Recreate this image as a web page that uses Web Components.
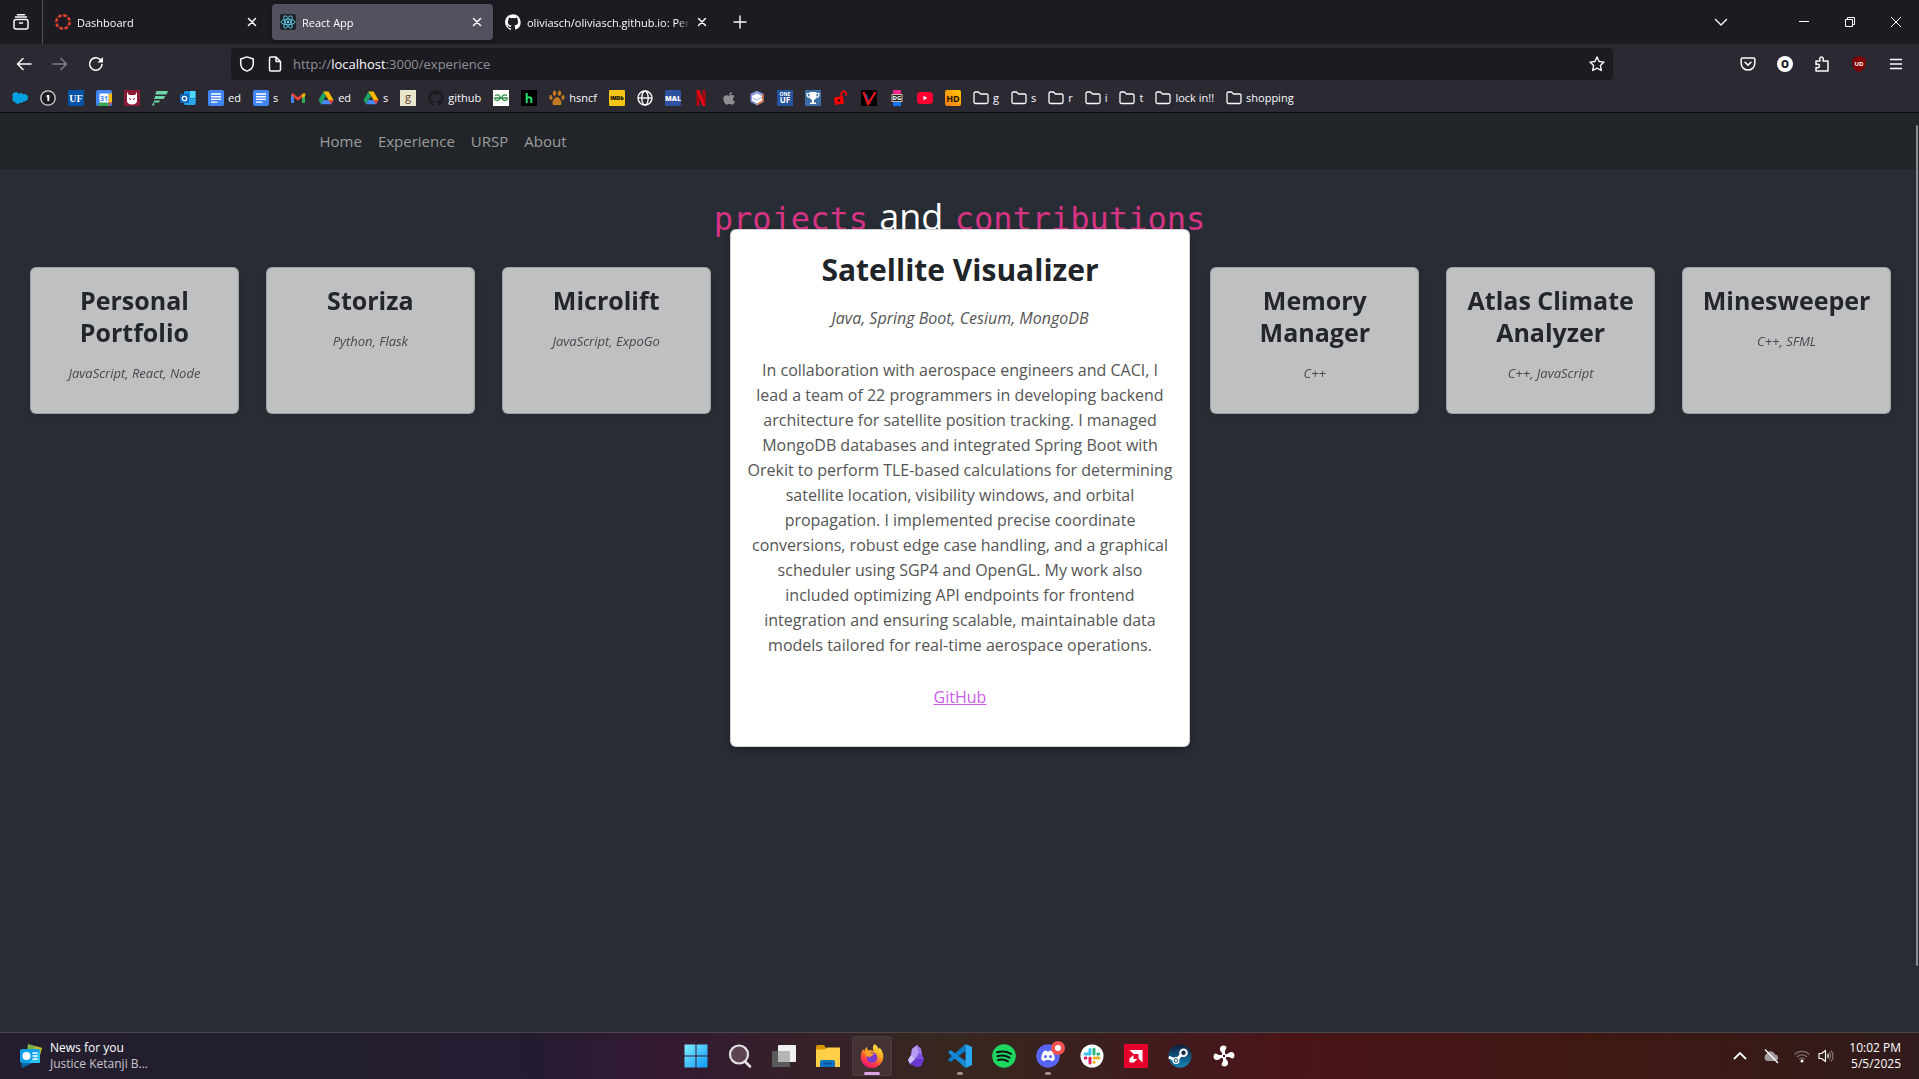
<!DOCTYPE html>
<html lang="en">
<head>
<meta charset="utf-8">
<title>React App</title>
<style>
  html, body { margin: 0; height: 100%; }
  body { font-family: "Open Sans", "Noto Sans", sans-serif; background: #282c34; overflow: hidden; }
</style>
</head>
<body>
<desktop-screen></desktop-screen>
<script>
const GITHUB = 'M8 .2a8 8 0 0 0-2.5 15.6c.4.1.5-.2.5-.4v-1.500c-2.200.5-2.700-1-2.700-1-.4-.9-.9-1.200-.9-1.200-.7-.5.1-.5.1-.5.8.1 1.200.8 1.200.8.7 1.200 1.900.9 2.300.7.1-.5.3-.9.5-1.100-1.800-.2-3.600-.9-3.600-4 0-.9.3-1.600.8-2.100-.1-.2-.4-1 .1-2.100 0 0 .7-.2 2.200.8a7.500 7.500 0 0 1 4 0c1.500-1 2.200-.8 2.200-.8.4 1.100.2 1.900.1 2.100.5.6.8 1.300.8 2.100 0 3.100-1.900 3.700-3.700 3.900.3.3.6.8.6 1.500v2.200c0 .2.1.5.6.4A8 8 0 0 0 8 .2z';
const FAN = [0, 90, 180, 270].map(a => `<path transform="rotate(${a} 12 12)" d="M11 11.500C10.500 8.500 7.300 7 8 4c.7-2.700 4.500-3.200 6-1.500 1.300 1.600-.8 3-1 5-.1 1.500.3 2.500 0 4z" fill="#fff"/>`).join('');
const BOOKMARK_FONT = 'font-family="Open Sans, Noto Sans, sans-serif" text-anchor="middle"';
const DOC = '<rect width="16" height="16" rx="2" fill="#4285f4"/><path d="M3 4h10M3 6.700h10M3 9.400h10M3 12.100h6.500" stroke="#fff" stroke-width="1.400"/>';
const DRIVE = '<path d="M5.500 1.500h5L8 6z" fill="#188038"/><path d="M5.500 1.500 0.500 10l2.500 4.300L8 6z" fill="#1ea362"/><path d="M10.500 1.500 15.500 10h-5L5.500 1.500z" fill="#ffba00"/><path d="M5.500 10h10L13 14.300H3z" fill="#4688f4"/><path d="M15.500 10 13 14.300 10.500 10z" fill="#ea4335"/>';
const L = 'fill="none" stroke="currentColor" stroke-linecap="round" stroke-linejoin="round"';

const ICONS = {
  recent: [16, `<g ${L} stroke-width="1.500"><rect x="1" y="5.500" width="14" height="9.500" rx="2"/><path d="M2.500 3h11M4.500.8h7M6.500 9h3"/></g>`],
  canvas: [16, `<circle cx="8" cy="8" r="6.700" fill="none" stroke="#e13f2b" stroke-width="2.600" stroke-dasharray="3.600 1.660"/>`],
  react: [16, `<rect width="16" height="16" rx="2" fill="#20232a"/><g fill="none" stroke="#61dafb" stroke-width=".8"><ellipse cx="8" cy="8" rx="7" ry="2.700"/><ellipse cx="8" cy="8" rx="7" ry="2.700" transform="rotate(60 8 8)"/><ellipse cx="8" cy="8" rx="7" ry="2.700" transform="rotate(120 8 8)"/></g><circle cx="8" cy="8" r="1.300" fill="#61dafb"/>`],
  github: [16, `<path d="${GITHUB}" fill="currentColor"/>`],
  close: [16, `<path d="M4.500 4.500l7 7m0-7l-7 7" ${L} stroke-width="1.500"/>`],
  plus: [16, `<path d="M8 2v12M2 8h12" ${L} stroke-width="1.400"/>`],
  chevron: [16, `<path d="M2.500 5.500 8 11l5.500-5.500" ${L} stroke-width="1.400"/>`],
  minimize: [16, `<path d="M3 7.500h10" stroke="#fff" fill="none"/>`],
  restore: [16, `<path d="M3.500 5.500h7v7h-7zM5.500 5V3.500h7v7H11" fill="none" stroke="#fff"/>`],
  quit: [16, `<path d="M3 3l10 10M13 3 3 13" fill="none" stroke="#fff"/>`],
  back: [16, `<path d="M15 8H2M7 2.500 1.500 8 7 13.500" ${L} stroke-width="1.500"/>`],
  forward: [16, `<path d="M1 8h13M9 2.500 14.500 8 9 13.500" ${L} stroke-width="1.500"/>`],
  reload: [16, `<path d="M14 8.500A6.200 6.200 0 1 1 12 3.400L14 5.500" ${L} stroke-width="1.600"/><path d="M15 1v5.500H9.500z" fill="currentColor"/>`],
  shield: [16, `<path d="M8 .9 14.300 3v4.500c0 3.600-2.500 6.300-6.300 7.600-3.800-1.300-6.300-4-6.300-7.600V3z" ${L} stroke-width="1.500"/>`],
  page: [16, `<path d="M4 1h5l4.500 4.500V13.500a1.500 1.500 0 0 1-1.500 1.500H4a1.500 1.500 0 0 1-1.500-1.500v-11A1.500 1.500 0 0 1 4 1zM9 1v4.500h4.500" ${L} stroke-width="1.500"/>`],
  star: [16, `<path d="M8 1l2.100 4.500 4.900.6-3.600 3.400.9 5L8 12.100 3.700 14.500l.9-5L1 6.100l4.900-.6z" ${L} stroke-width="1.400"/>`],
  pocket: [16, `<path d="M2.500 2h11A1.300 1.300 0 0 1 14.800 3.300v4A6.800 6.800 0 0 1 1.200 7.300v-4A1.300 1.300 0 0 1 2.500 2zM5 6.200l3 2.900 3-2.900" ${L} stroke-width="1.500"/>`],
  account: [16, `<circle cx="8" cy="8" r="8" fill="#fff"/><text x="8" y="11.500" ${BOOKMARK_FONT} font-size="10" font-weight="800" fill="#1c1b22">O</text>`],
  puzzle: [16, `<path d="M2 15V11.500c1 .5 3.500.5 3.500-1.500S3 8 2 8.500V5h4C5.500 3.500 5.500 1 7.500 1s2.100 2.500 1.500 4h5v10z" ${L} stroke-width="1.500"/>`],
  ublock: [16, `<path d="M8 0c2 1.200 4 1.800 6.500 2v6c0 4-3 6.500-6.500 8-3.500-1.500-6.500-4-6.500-8V2C4 1.800 6 1.200 8 0z" fill="#800000"/><text x="8" y="10" ${BOOKMARK_FONT} font-size="6" font-weight="700" fill="#fff">UD</text>`],
  menu: [16, `<path d="M2.500 3.500h11M2.500 8h11M2.500 12.500h11" ${L} stroke-width="1.500"/>`],

  salesforce: [16, `<path d="M6.600 3.700A3.400 3.400 0 0 1 11.200 4.300 3.600 3.600 0 0 1 16 7.800a3.500 3.500 0 0 1-4.300 3.500 2.700 2.700 0 0 1-3.400 1.200A3.100 3.100 0 0 1 2.900 12 2.700 2.700 0 0 1 1 7.500 3.200 3.200 0 0 1 6.600 3.700z" fill="#00a1e0"/>`],
  onepass: [16, `<circle cx="8" cy="8" r="7.200" fill="#1c1c22" stroke="#d8d8da" stroke-width="1.300"/><path d="M6.800 5h2.500v6H7.400V7.200h-.9z" fill="#fff"/>`],
  uf: [16, `<rect width="16" height="16" fill="#0052a5"/><text x="8" y="11.500" font-family="Liberation Serif, serif" text-anchor="middle" font-size="10" font-weight="700" fill="#fff">UF</text>`],
  calendar: [16, `<rect width="16" height="16" rx="2" fill="#4285f4"/><path d="M12.500 3.500H16V12.500h-3.500z" fill="#fbbc04"/><path d="M3 12.500h9.500V16H2.500z" fill="#34a853"/><path d="M12.500 12.500H16L12.500 16z" fill="#ea4335"/><rect x="3.500" y="3.500" width="9" height="9" fill="#fff"/><text x="8" y="10.800" ${BOOKMARK_FONT} font-size="7" font-weight="700" fill="#4285f4">31</text>`],
  cat: [16, `<rect width="16" height="16" fill="#8b1a35"/><path d="M3 2l2 3h6l2-3v9c0 2-2 3.500-5 3.500S3 13 3 11z" fill="#fff"/><path d="M5 8.500l2 1M11 8.500l-2 1" stroke="#8b1a35"/>`],
  fstripes: [16, `<path d="M4.500 1H16l-1.500 3.500H3.200zM3.200 6h10l-1.500 3H2zM2 10.500h6l-1 2H1.300L0 15.500h2.300z" fill="#6fd3a9"/>`],
  outlook: [16, `<rect x="4" y="1" width="11.500" height="14" rx="1" fill="#1490df"/><path d="M10 1h5.500v7H10z" fill="#50d9ff"/><path d="M4 9h12l-1 6H5z" fill="#28a8ea"/><rect x="0" y="4" width="9" height="9" rx="1" fill="#0f66bd"/><circle cx="4.500" cy="8.500" r="2.200" fill="none" stroke="#fff" stroke-width="1.300"/>`],
  docs: [16, DOC],
  gmail: [16, `<path d="M1 3.500V13h3V7.500z" fill="#4285f4"/><path d="M15 3.500V13h-3V7.500z" fill="#34a853"/><path d="M1.800 4 8 9l6.200-5" fill="none" stroke="#ea4335" stroke-width="2.800"/><path d="M12 4.500 15.200 3v3L12 8z" fill="#fbbc04"/>`],
  drive: [16, DRIVE],
  goodreads: [16, `<rect width="16" height="16" fill="#e9e5cd"/><text x="8" y="11" ${BOOKMARK_FONT} font-size="11" fill="#5b3a1a">g</text>`],
  githubDark: [16, `<path d="${GITHUB}" fill="#1b1a20"/>`],
  gfg: [16, `<rect width="16" height="16" fill="#fff"/><path d="M1 8h14M2 5.500c4-2 5.500 1 5 3s-4 3-5.500.5M14 5.500c-4-2-5.500 1-5 3s4 3 5.500.5" fill="none" stroke="#2f8d46" stroke-width="1.300"/>`],
  hrank: [16, `<rect width="16" height="16" fill="#000"/><path d="M5.700 3v10M5.700 9c0-2.500 4.600-2.500 4.600 0v4" fill="none" stroke="#1fe26b" stroke-width="2"/>`],
  paw: [16, `<path d="M8 7c2 0 4.500 3.500 4.500 6 0 3-2.500 2-4.500 2s-4.500 1-4.500-2C3.500 10.500 6 7 8 7z" fill="#c47a20"/><g fill="#c47a20"><ellipse cx="5.500" cy="3.300" rx="1.700" ry="2.700"/><ellipse cx="10.500" cy="3.300" rx="1.700" ry="2.700"/><ellipse cx="2" cy="7.500" rx="1.600" ry="2.400"/><ellipse cx="14" cy="7.500" rx="1.600" ry="2.400"/></g>`],
  imdb: [16, `<rect width="16" height="16" rx="1" fill="#f5c518"/><text x="8" y="10" ${BOOKMARK_FONT} font-size="5" font-weight="800" fill="#000">IMDb</text>`],
  globe: [16, `<g fill="none" stroke="#fbfbfe" stroke-width="1.400"><circle cx="8" cy="8" r="7"/><ellipse cx="8" cy="8" rx="3.200" ry="7"/><path d="M1 8h14"/></g>`],
  mal: [16, `<rect width="16" height="16" rx="1.500" fill="#2e51a2"/><text x="8" y="11" ${BOOKMARK_FONT} font-size="7" font-weight="800" fill="#fff">MAL</text>`],
  netflix: [16, `<path d="M3.500 0h3v16h-3zM9.500 0h3v16h-3z" fill="#b1060f"/><path d="M3.500 0h3l6 16h-3z" fill="#e50914"/>`],
  apple: [16, `<path d="M11 2c0 1.500-1.300 3-2.900 2.900C8 3.400 9.500 2 11 2zM8.200 5.700c.6 0 1.500-.7 2.800-.6 1 0 2 .5 2.500 1.400-2.200 1.400-1.900 4.200.5 5.200-.5 1.300-1.500 3-2.800 3-1 0-1.400-.6-2.700-.6s-1.700.6-2.600.6c-2 0-5.200-6-2.600-8.700 1.700-1.700 3.600-.3 4.900-.3z" fill="#8e8e93"/>`],
  cube: [16, `<path d="M8 .8l6.500 3v8L8 15.500 1.500 11.800v-8z" fill="#8b98e0"/><path d="M14.500 3.800v8L8 15.500l1-3 3.500-2V5z" fill="#e8763a"/><path d="M3 6l5-2.500L13 6v4.500l-5 3-5-3z" fill="#fff"/><path d="M3.500 8 8 10l5-3" fill="none" stroke="#8b98e0" stroke-width=".8"/>`],
  oneuf: [16, `<rect width="16" height="16" fill="#26549c"/><text x="8" y="6" ${BOOKMARK_FONT} font-size="5" font-weight="700" fill="#fff">ONE</text><text x="8" y="13" ${BOOKMARK_FONT} font-size="8" font-weight="700" fill="#fff">UF</text>`],
  trophy: [16, `<rect width="16" height="16" fill="#3a6ea5"/><path d="M4.500 2h7v4.500c0 2-1.500 3-2.500 3.500v2.500h2V14H5v-1.500h2V10c-1-.5-2.500-1.500-2.500-3.500z" fill="#fff"/><path d="M4.500 3.500H2c0 2.500 1 4 3 4M11.500 3.500H14c0 2.500-1 4-3 4" fill="none" stroke="#fff" stroke-width="1.200"/>`],
  unlock: [16, `<path d="M1 7.500 10 6l1 7.500L2 15z" fill="#f00"/><path d="M8.500 6.500 8.300 4a2.400 2.400 0 0 1 4.800-.3l.2 2" fill="none" stroke="#f00" stroke-width="1.700"/><circle cx="6" cy="10.500" r="1.300" fill="#300"/>`],
  vee: [16, `<rect width="16" height="16" fill="#000"/><path d="M2.500 2 7 14 14.500 2" fill="none" stroke="#f01818" stroke-width="2.200"/><path d="M5 4l2.500 7" stroke="#3a56c0"/>`],
  dgbadge: [16, `<rect x="4" y="0" width="8" height="4" fill="#f0288c"/><rect x="4" y="12" width="8" height="4" fill="#1674ff"/><rect x="3" y="4.500" width="10" height="7" fill="#222" stroke="#cbb8a0"/><text x="8" y="10.200" ${BOOKMARK_FONT} font-size="6" font-weight="700" fill="#fff">DG</text>`],
  youtube: [16, `<rect y="2" width="16" height="12" rx="3.500" fill="#ff0033"/><path d="M6.500 5.800v4.400L10.300 8z" fill="#fff"/>`],
  hd: [16, `<defs><linearGradient id="hdg" x1="1" y1="0" x2="0" y2="1"><stop offset="0" stop-color="#ffc800"/><stop offset="1" stop-color="#ff7a1a"/></linearGradient></defs><rect width="16" height="16" rx="2" fill="url(#hdg)"/><text x="8" y="11.500" ${BOOKMARK_FONT} font-size="9" font-weight="700" fill="#1a1200">HD</text>`],
  folder: [16, `<path d="M1 12V3.500A1.500 1.500 0 0 1 2.500 2h3L7.500 4h6A1.500 1.500 0 0 1 15 5.500V12a1.500 1.500 0 0 1-1.500 1.500h-11A1.500 1.500 0 0 1 1 12z" ${L} stroke-width="1.300"/>`],

  news: [24, `<path d="M9 0l14 4-4 14-12-5z" fill="#7cb342"/><path d="M16 2l7 2-3 10-4-1z" fill="#c0b62c"/><path d="M1 10l19 6-17 8z" fill="#0a6aa8"/><rect x="1" y="5" width="20" height="14" rx="2" fill="#12a0e8"/><path d="M21 7v12H10z" fill="#2bc4ee"/><circle cx="7.500" cy="12" r="4" fill="#fff"/><path d="M13.500 9h5M13.500 12h5M13.500 15h5" stroke="#fff" stroke-width="1.500"/>`],
  windows: [24, `<defs><linearGradient id="wing" x1="0" y1="0" x2="1" y2="1"><stop offset="0" stop-color="#7ff0ff"/><stop offset="1" stop-color="#0e97ff"/></linearGradient></defs><path d="M.5.500h11v11H.500zM12.500.500h11v11h-11zM.500 12.500h11v11H.500zM12.500 12.500h11v11h-11z" fill="url(#wing)"/>`],
  search: [24, `<circle cx="11" cy="10.500" r="9" fill="#5c4450" stroke="#e4e2e4" stroke-width="2.200"/><path d="M17 17.500l5 5" stroke="#e4e2e4" stroke-width="2.600" stroke-linecap="round"/>`],
  tasks: [24, `<rect x="0" y="7" width="18" height="16" rx="1" fill="#5a5a5a"/><rect x="6" y="1" width="18" height="17" rx="1" fill="#f0f0f0"/><rect x="6" y="7" width="12" height="11" fill="#b5b5b5"/>`],
  explorer: [24, `<path d="M0 2.500A1.500 1.500 0 0 1 1.500 1H8l2 3v2H0z" fill="#d99500"/><path d="M0 5.500h9L11 3.500h13V23H0z" fill="#ffcf48"/><path d="M4 23v-5.500A2 2 0 0 1 6 16h11a2 2 0 0 1 2 2v5z" fill="#1272c4"/><path d="M7.500 19.500h8" stroke="#0a4f93" stroke-width="1.500"/>`],
  firefox: [24, `<defs><linearGradient id="ffg" x1=".8" y1="0" x2=".3" y2="1"><stop offset="0" stop-color="#fff04a"/><stop offset=".45" stop-color="#ff9a1e"/><stop offset=".75" stop-color="#ff3b47"/><stop offset="1" stop-color="#f0107a"/></linearGradient></defs><path d="M14.500 0c2.500 1.500 3.500 3.500 4 5 .8-.3 1-.8 1-1.500 2.500 2.500 4 6 3.800 9.500C23 19 18 24 12 24S.8 19 .8 13c0-3.500 1-6 2.700-8 0 1 .3 1.800.8 2.300C5 5 6 3.500 7 3c0 1.500.5 3 1.800 3.500 2-.5 3.700 0 4.700 1C12.500 5 12.500 2 14.500 0z" fill="url(#ffg)"/><circle cx="12" cy="13.500" r="5.300" fill="#7a3bd0"/><path d="M4.500 8.500c3-1.500 5-.5 6.500.8 1.200 0 2.500.2 3 .7-.5 1.200-2.500 1.300-3 2.500-1.500 1-4.500.5-6.500-4z" fill="#ff9f25"/>`],
  obsidian: [24, `<path d="M13 1l4 4 1 6 2 4-3 7-4 1-7-3-2-4 3-5 1-6z" fill="#7c4fe0"/><path d="M13 1l-5 4-1 6 4 4 4-6z" fill="#b79cf2"/><path d="M13 1l4 4 1 6-3-2z" fill="#9a78ea"/><path d="M7 11l-3 5 2 4 5-1v-4z" fill="#d0c0f8"/><path d="M11 15l9 0-3 7-4 1-7-3z" fill="#6a37cc"/>`],
  vscode: [24, `<path d="M17.500 0 0 15.500l2.500 2.500L17.500 7z" fill="#0a7bc9"/><path d="M17.500 24 0 8.500 2.500 6l15 11z" fill="#1489d6"/><path d="M17.500 0 24 3v18l-6.500 3z" fill="#29a8f2"/>`],
  spotify: [24, `<circle cx="12" cy="12" r="11.800" fill="#1ed760"/><path d="M5 8.300c5-1.400 10-.8 14 1.500M5.500 12.200c4-1.200 8.500-.7 12 1.500M6 16c3.500-1 7-.5 10 1.300" fill="none" stroke="#121212" stroke-width="2" stroke-linecap="round"/>`],
  discord: [24, `<circle cx="12" cy="12" r="11.800" fill="#5865f2"/><path d="M7.500 7.500C9 6.800 10 6.600 10.500 6.600l.4.800h2.200l.4-.8c.5 0 1.500.2 3 .9 1.500 2.300 2.300 5 2.200 8-1.200 1-2.400 1.500-3.500 1.700l-.8-1.400c-1.500.4-3.300.4-4.800 0l-.8 1.400c-1.100-.2-2.300-.7-3.500-1.700-.1-3 .7-5.700 2.200-8z" fill="#fff"/><circle cx="9.500" cy="12.500" r="1.500" fill="#5865f2"/><circle cx="14.500" cy="12.500" r="1.500" fill="#5865f2"/>`],
  slack: [24, `<circle cx="12" cy="12" r="11.500" fill="#fff"/><g stroke-width="3" stroke-linecap="round" fill="none"><path d="M10 5.500v4M5 10h5" stroke="#36c5f0"/><path d="M14 5v5M18.800 10h-1" stroke="#2eb67d"/><path d="M14 14h5M14 18.500v-.5" stroke="#ecb22e"/><path d="M10 14v5M5.200 14h.8" stroke="#e01e5a"/></g>`],
  amd: [24, `<rect width="24" height="24" fill="#e4002b"/><path d="M5.500 6h13v12.500l-4-4v-4.500h-5z" fill="#fff"/><path d="M9.500 11v4h4l-3.800 3.500H5.500v-4z" fill="#fff"/>`],
  steam: [24, `<defs><linearGradient id="stg" x1="0" y1="0" x2="0" y2="1"><stop offset="0" stop-color="#101c3c"/><stop offset="1" stop-color="#1387b8"/></linearGradient></defs><circle cx="12" cy="12" r="11.500" fill="url(#stg)"/><path d="M.8 13 8 16.500 15 9" fill="none" stroke="#fff" stroke-width="3"/><circle cx="15.500" cy="8.800" r="4.300" fill="#fff"/><circle cx="15.500" cy="8.800" r="2.700" fill="#14284a" stroke="#fff"/><circle cx="8" cy="16.500" r="3.500" fill="#fff"/><circle cx="8" cy="16.500" r="1.800" fill="#fff" stroke="#14507a"/>`],
  fan: [24, `${FAN}<circle cx="12" cy="12" r="2.500" fill="#fff"/><circle cx="12" cy="12" r="1.200" fill="#3c1c1c"/>`],
  up: [16, `<path d="M2 11l6-6 6 6" fill="none" stroke="#fff" stroke-width="1.800"/>`],
  cloudoff: [16, `<path d="M4 13a4 4 0 0 1-.3-7.300A4.500 4.500 0 0 1 12 6.500 3.300 3.300 0 0 1 12.500 13z" fill="#a39b9b"/><path d="M2 1.500 15 15" stroke="#fff" stroke-width="1.300"/>`],
  wifi: [16, `<g fill="none" stroke="#7a6b6b" stroke-width="1.300"><path d="M.5 6.500a10.500 10.500 0 0 1 15 0M3 9a7 7 0 0 1 10 0M5.300 11.300a4 4 0 0 1 5.400 0"/></g><circle cx="8" cy="13" r="1.500" fill="#fff"/>`],
  speaker: [16, `<path d="M1 5.500h2.500L7.500 2.500v11l-4-3H1z" fill="none" stroke="#fff" stroke-width="1.200" stroke-linejoin="round"/><path d="M9.500 6a3 3 0 0 1 0 4" fill="none" stroke="#fff" stroke-width="1.200"/><path d="M11 4a6 6 0 0 1 0 8M13 2.500a8.500 8.500 0 0 1 0 11" fill="none" stroke="#857474" stroke-width="1.200"/>`]
};

function define(name, html, setup) {
  const template = document.createElement('template');
  template.innerHTML = html;
  customElements.define(name, class extends HTMLElement {
    constructor() {
      super();
      this.attachShadow({ mode: 'open' }).append(template.content.cloneNode(true));
    }
    connectedCallback() {
      if (setup && !this.ready) setup(this, this.shadowRoot);
      this.ready = true;
    }
  });
}

define('ui-icon', `<style>:host{display:block;flex:none;width:var(--size,16px);height:var(--size,16px)}svg{display:block;width:100%;height:100%;overflow:visible}</style><svg aria-hidden="true"></svg>`, (el, root) => {
  const [box, body] = ICONS[el.getAttribute('name')];
  const svg = root.querySelector('svg');
  svg.setAttribute('viewBox', `0 0 ${box} ${box}`);
  svg.innerHTML = body;
});

define('icon-button', `<style>
  :host{display:block;flex:none;width:var(--w,36px);height:32px}
  button{all:unset;display:grid;place-items:center;width:100%;height:100%;color:inherit}
</style><button type="button"></button>`, (el, root) => {
  const button = root.querySelector('button');
  button.setAttribute('aria-label', el.getAttribute('label'));
  button.innerHTML = `<ui-icon name="${el.getAttribute('icon')}"></ui-icon>`;
});

define('browser-tab', `<style>
  :host{display:flex;align-items:center;box-sizing:border-box;flex:0 1 221px;min-width:0;height:36px;padding:0 0 0 8px;border-radius:4px;color:#fbfbfe}
  :host([selected]){background:#52525e;box-shadow:0 0 4px rgba(0,0,0,.4)}
  .t{flex:1;min-width:0;margin-left:6px;white-space:nowrap;overflow:hidden;font-size:11px;-webkit-mask-image:linear-gradient(to left,transparent,#000 12px);mask-image:linear-gradient(to left,transparent,#000 12px)}
  icon-button{--w:32px;margin-left:-4px}
</style><slot name="icon"></slot><span class="t"><slot></slot></span><icon-button icon="close" label="Close tab"></icon-button>`);

define('tab-strip', `<style>
  :host{display:flex;align-items:center;height:44px;background:#1c1b22;color:#fbfbfe}
  .first{border-right:1px solid #52525e;height:44px;width:43px;display:grid;place-items:center;box-sizing:border-box}
  .tabs{flex:1;min-width:0;display:flex;align-items:center;gap:4px;padding-left:4px}
  .win{display:flex;gap:0}
  .win icon-button{--w:46px}
  .win icon-button.list{--w:120px}
</style>
<div class="first"><icon-button icon="recent" label="Recent browsing"></icon-button></div>
<div class="tabs">
  <browser-tab><ui-icon slot="icon" name="canvas"></ui-icon>Dashboard</browser-tab>
  <browser-tab selected><ui-icon slot="icon" name="react"></ui-icon>React App</browser-tab>
  <browser-tab><ui-icon slot="icon" name="github"></ui-icon>oliviasch/oliviasch.github.io: Personal</browser-tab>
  <icon-button icon="plus" label="New tab"></icon-button>
</div>
<div class="win"><icon-button class="list" icon="chevron" label="List all tabs"></icon-button><icon-button icon="minimize" label="Minimize"></icon-button><icon-button icon="restore" label="Restore"></icon-button><icon-button icon="quit" label="Close"></icon-button></div>`);

define('nav-toolbar', `<style>
  :host{display:flex;align-items:center;height:40px;padding:0 5px 0 6px;background:#2b2a33;color:#fbfbfe}
  .off{opacity:.4}
  .url{flex:1;display:flex;align-items:center;height:32px;margin:4px 117px 4px 117px;background:#1c1b22;border-radius:4px;font-size:13px}
  .url>icon-button{--w:28px}
  .url>.star{--w:32px}
  .url>:first-child{margin-left:2px}
  .url p{flex:1;margin:0;padding-left:4px;color:#8f8f98}
  b{font-weight:400;color:#fbfbfe}
  .ext{display:flex;gap:1px}
</style>
<icon-button icon="back" label="Back"></icon-button><icon-button class="off" icon="forward" label="Forward"></icon-button><icon-button icon="reload" label="Reload"></icon-button>
<div class="url"><icon-button icon="shield" label="Tracking protection"></icon-button><icon-button icon="page" label="Site information"></icon-button><p>http://<b>localhost</b>:3000/experience</p><icon-button class="star" icon="star" label="Bookmark"></icon-button></div>
<div class="ext"><icon-button icon="pocket" label="Pocket"></icon-button><icon-button icon="account" label="Account"></icon-button><icon-button icon="puzzle" label="Extensions"></icon-button><icon-button icon="ublock" label="Blocker"></icon-button><icon-button icon="menu" label="Menu"></icon-button></div>`);

define('bookmark-bar', `<style>
  :host{display:flex;align-items:center;height:28px;padding:4px 6px 0;background:#2b2a33;border-bottom:1px solid #0c0c0d;box-sizing:content-box;padding-top:0;color:#fbfbfe}
  a{display:flex;align-items:center;gap:4px;padding:4px 6px;color:inherit;text-decoration:none;font-size:11px;line-height:20px;white-space:nowrap}
</style>`, (el, root) => {
  const items = ['salesforce', 'onepass', 'uf', 'calendar', 'cat', 'fstripes', 'outlook', 'docs:ed', 'docs:s', 'gmail', 'drive:ed', 'drive:s', 'goodreads', 'githubDark:github', 'gfg', 'hrank', 'paw:hsncf', 'imdb', 'globe', 'mal', 'netflix', 'apple', 'cube', 'oneuf', 'trophy', 'unlock', 'vee', 'dgbadge', 'youtube', 'hd', 'folder:g', 'folder:s', 'folder:r', 'folder:i', 'folder:t', 'folder:lock in!!', 'folder:shopping'];
  root.innerHTML += items.map(item => {
    const [icon, label] = item.split(':');
    return `<a href="#" aria-label="${label || icon}"><ui-icon name="${icon}"></ui-icon>${label ? `<span>${label}</span>` : ''}</a>`;
  }).join('');
});

define('site-nav', `<style>
  :host{display:block;background:#212529}
  nav{display:flex;gap:16px;align-items:center;height:56px;width:1280px;max-width:100%;margin:0 auto}
  a{color:#9b9d9e;text-decoration:none;font-size:15px}
</style><nav><a href="#">Home</a><a href="#">Experience</a><a href="#">URSP</a><a href="#">About</a></nav>`);

define('project-card', `<style>
  :host{display:block;box-sizing:border-box;min-height:147px;padding:16px 15px 15px;text-align:center;background:#fff;border:1px solid rgba(0,0,0,.176);border-radius:6px;opacity:.7;box-shadow:0 4px 8px rgba(0,0,0,.1)}
  h2{margin:0 0 16px;font-size:25px;line-height:32px;font-weight:700;color:#212529}
  p{margin:0 0 16px;font-size:13px;line-height:18px;font-style:italic;color:#555}
</style><h2><slot></slot></h2><p><slot name="stack"></slot></p>`);

define('featured-card', `<style>
  :host{display:block;position:relative;z-index:1;box-sizing:border-box;margin:-38px -7px 0 -8px;padding:22px 16px 36px;text-align:center;background:#fff;border:1px solid rgba(0,0,0,.176);border-radius:6px;box-shadow:0 4px 8px rgba(0,0,0,.2);color:#555;font-size:16px;line-height:25px}
  h2{margin:0 0 18px;font-size:30px;line-height:36px;font-weight:700;color:#212529}
  p{margin:0 0 27px}
  .stack{font-style:italic}
  p:last-child{margin:0}
  ::slotted(a){color:#cc5de8}
</style><h2><slot name="title"></slot></h2><p class="stack"><slot name="stack"></slot></p><p><slot></slot></p><p><slot name="link"></slot></p>`);

define('experience-page', `<style>
  :host{display:flex;flex-direction:column;position:relative;background:#282c34}
  h1{margin:0;padding-top:22px;text-align:center;font-size:36px;line-height:52px;font-weight:400;color:#fff}
  code{margin:0 2px;font-family:"DejaVu Sans Mono",monospace;font-size:32px;color:#d63384}
  .grid{display:grid;grid-template-columns:repeat(3,209fr) 446fr repeat(3,209fr);gap:27px;align-items:start;padding:22px 28px 0 30px}
  .bar{position:absolute;right:1px;top:12px;bottom:66px;width:2px;border-radius:1px;background:#8a8c90}
  .grid>*{min-width:0}
</style>
<site-nav></site-nav>
<h1><code>projects</code> and <code>contributions</code></h1>
<div class="grid">
  <project-card>Personal Portfolio<span slot="stack">JavaScript, React, Node</span></project-card>
  <project-card>Storiza<span slot="stack">Python, Flask</span></project-card>
  <project-card>Microlift<span slot="stack">JavaScript, ExpoGo</span></project-card>
  <featured-card><span slot="title">Satellite Visualizer</span><span slot="stack">Java, Spring Boot, Cesium, MongoDB</span>In collaboration with aerospace engineers and CACI, I lead a team of 22 programmers in developing backend architecture for satellite position tracking. I managed MongoDB databases and integrated Spring Boot with Orekit to perform TLE-based calculations for determining satellite location, visibility windows, and orbital propagation. I implemented precise coordinate conversions, robust edge case handling, and a graphical scheduler using SGP4 and OpenGL. My work also included optimizing API endpoints for frontend integration and ensuring scalable, maintainable data models tailored for real-time aerospace operations.<a slot="link" href="#">GitHub</a></featured-card>
  <project-card>Memory Manager<span slot="stack">C++</span></project-card>
  <project-card>Atlas Climate Analyzer<span slot="stack">C++, JavaScript</span></project-card>
  <project-card>Minesweeper<span slot="stack">C++, SFML</span></project-card>
</div>
<div class="bar"></div>`);

define('task-button', `<style>
  :host{display:block;width:44px;height:46px}
  button{all:unset;box-sizing:border-box;position:relative;display:grid;place-items:center;width:40px;height:40px;margin:3px 2px;border-radius:4px;border:1px solid transparent;--size:24px}
  :host([active]) button{background:rgba(255,255,255,.07);border-color:rgba(255,255,255,.06)}
  i{position:absolute;bottom:0;width:6px;height:3px;border-radius:2px;background:#9b9292;display:none}
  :host([running]) i{display:block}
  :host([active]) i{display:block;width:16px;background:#dba4e6}
  b{position:absolute;right:2px;top:4px;box-sizing:border-box;width:14px;height:14px;border-radius:50%;border:4px solid #ee5350;background:#fff;display:none}
  :host([badge]) b{display:block}
</style><button type="button"><slot></slot><i></i><b></b></button>`);

define('task-bar', `<style>
  :host{display:grid;grid-template-columns:1fr auto 1fr;align-items:center;height:46px;border-top:1px solid #4b464c;color:#fff;font-size:12px;line-height:16px;
    background:linear-gradient(90deg,#241d2e 0%,#221f2e 15%,#251b31 28%,#331a33 34%,#37271f 50%,#3a201f 56%,#4a1519 67%,#3f1812 83%,#301b1c 100%)}
  .news{display:flex;align-items:center;gap:7px;padding-left:19px;--size:24px}
  .news p,.clock{margin:0}
  .news span{color:#c9c5cc}
  .apps{display:flex}
  .tray{display:flex;justify-content:flex-end;align-items:center;gap:15px;padding-right:18px}
  .net{display:flex;gap:8px}
  .clock{text-align:right}
</style>
<div class="news"><ui-icon name="news"></ui-icon><p>News for you<br><span>Justice Ketanji B...</span></p></div>
<div class="apps"></div>
<div class="tray"><ui-icon name="up"></ui-icon><ui-icon name="cloudoff"></ui-icon><div class="net"><ui-icon name="wifi"></ui-icon><ui-icon name="speaker"></ui-icon></div><p class="clock">10:02 PM<br>5/5/2025</p></div>`, (el, root) => {
  const apps = { windows: '', search: '', tasks: '', explorer: '', firefox: 'active', obsidian: '', vscode: 'running', spotify: '', discord: 'running badge', slack: '', amd: '', steam: '', fan: '' };
  root.querySelector('.apps').innerHTML = Object.entries(apps).map(([name, state]) => `<task-button ${state}><ui-icon name="${name}"></ui-icon></task-button>`).join('');
});

define('desktop-screen', `<style>
  :host{display:flex;flex-direction:column;height:100vh}
  experience-page{flex:1}
</style><tab-strip></tab-strip><nav-toolbar></nav-toolbar><bookmark-bar></bookmark-bar><experience-page></experience-page><task-bar></task-bar>`);
</script>
</body>
</html>
